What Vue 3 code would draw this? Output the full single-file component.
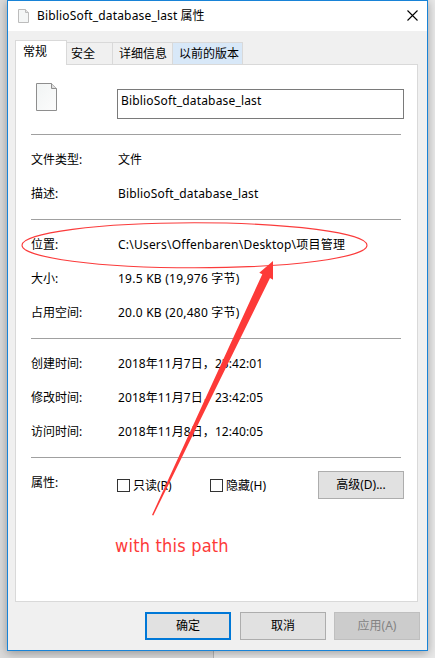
<script setup>
const tabs = [
  { label: '安全', cls: 'security' },
  { label: '详细信息', cls: 'details' },
  { label: '以前的版本', cls: 'versions' },
]
const groups = [
  [
    { label: '文件类型:', value: '文件' },
    { label: '描述:', value: 'BiblioSoft_database_last', cls: 'name' },
  ],
  [
    { label: '位置:', value: 'C:\\Users\\Offenbaren\\Desktop\\项目管理', cls: 'path' },
    { label: '大小:', value: '19.5 KB (19,976 字节)', cls: 'size' },
    { label: '占用空间:', value: '20.0 KB (20,480 字节)', cls: 'size' },
  ],
  [
    { label: '创建时间:', value: '2018年11月7日，23:42:01', cls: 'date' },
    { label: '修改时间:', value: '2018年11月7日，23:42:05', cls: 'date' },
    { label: '访问时间:', value: '2018年11月8日，12:40:05', cls: 'date' },
  ],
]
</script>

<template>
  <div class="screen">
    <div class="behind"></div>
    <div class="window">
      <header class="titlebar">
        <svg class="small-file" width="12" height="14" viewBox="0 0 12 14">
          <path d="M.5.5h7l3 3v10H.5z" fill="#f4f6f6" stroke="#bcbcbc" />
          <path d="M7.500.5v3h3" fill="#e4e4e4" stroke="#bcbcbc" />
        </svg>
        <span class="title"><span class="name">BiblioSoft_database_last</span> 属性</span>
        <svg class="close" width="11" height="11" viewBox="0 0 11 11">
          <path d="M.5.5l10 10M10.500.5l-10 10" stroke="#000" stroke-width="1.100" />
        </svg>
      </header>

      <nav class="tabs">
        <div class="tab active"><span>常规</span></div>
        <div v-for="t in tabs" :key="t.label" class="tab" :class="t.cls"><span>{{ t.label }}</span></div>
      </nav>

      <main class="panel">
        <div class="head">
          <svg class="file" width="22" height="29" viewBox="0 0 22 29">
            <defs>
              <linearGradient id="paper" x1="0" y1="0" x2="1" y2="1">
                <stop offset="0" stop-color="#f1f4f4" />
                <stop offset="1" stop-color="#fcfcfc" />
              </linearGradient>
            </defs>
            <path d="M.5.5h15l5 5v22H.5z" fill="url(#paper)" stroke="#8e8e8e" />
            <path d="M15.500.5v5h5" fill="#dedede" stroke="#8e8e8e" />
          </svg>
          <div class="field"><span class="name">BiblioSoft_database_last</span></div>
        </div>
        <template v-for="(g, i) in groups" :key="i">
          <div class="rule"></div>
          <div v-for="r in g" :key="r.label" class="row">
            <span class="label">{{ r.label }}</span>
            <span class="value" :class="r.cls">{{ r.value }}</span>
          </div>
        </template>
        <div class="rule"></div>
        <div class="row attrs">
          <span class="label">属性:</span>
          <div class="check first"><i></i><span>只读(R)</span></div>
          <div class="check"><i></i><span>隐藏(H)</span></div>
          <div class="button advanced">高级(D)...</div>
        </div>
      </main>

      <footer class="footer">
        <div class="button primary">确定</div>
        <div class="button">取消</div>
        <div class="button disabled">应用(A)</div>
      </footer>
    </div>

    <svg class="marks" width="435" height="658" viewBox="0 0 435 658">
      <ellipse cx="194.500" cy="245.300" rx="172.500" ry="22.500" fill="none" stroke="#fb3b3b" stroke-width="1.100" />
      <path d="M273 261L259.300 272.800L262.300 274.200L152 515L153.300 515.500L270 278L273 279.800z" fill="#fd3a38" />
    </svg>
    <div class="note">with this path</div>
  </div>
</template>

<style>
body { overflow: hidden; }
</style>

<style scoped>
* { box-sizing: border-box; }
.screen {
  position: relative;
  width: 435px;
  height: 658px;
  padding-left: 7px;
  overflow: hidden;
  background: #e8e8e8;
  font: 12px/16px "Noto Sans", "Noto Sans CJK SC", sans-serif;
  color: #000;
}
.behind {
  position: absolute;
  left: 0;
  top: 0;
  width: 214px;
  height: 658px;
  background: #dadada;
  border-right: 1px solid #b5b5b5;
}
.window {
  position: relative;
  display: flex;
  flex-direction: column;
  width: 421px;
  height: 651px;
  border: 1px solid #1883d7;
  background: #f0f0f0;
  box-shadow: 0 2px 9px rgba(0, 0, 0, 0.32);
}
.titlebar {
  display: flex;
  align-items: center;
  height: 30px;
  padding: 0 9px 0 10px;
  background: #fff;
}
.small-file { margin-right: 7px; }
.close { position: relative; top: -0.500px; }
.title { flex: 1; white-space: pre; }
.name { letter-spacing: 0.170px; }
.path { letter-spacing: 0.220px; }
.size { letter-spacing: 0.240px; }
.date { letter-spacing: 0.080px; }
.tabs {
  display: flex;
  align-items: flex-end;
  height: 34px;
  padding-left: 7px;
  margin-bottom: -1px;
}
.tab {
  height: 23px;
  padding-top: 3px;
  border: 1px solid #d9d9d9;
  border-left: 0;
  white-space: nowrap;
}
.active {
  position: relative;
  z-index: 1;
  width: 52px;
  height: 25px;
  padding: 3px 0 0 7px;
  border-left: 1px solid #d9d9d9;
  border-bottom: 0;
  background: #fff;
}
.security { width: 46px; padding-left: 4px; }
.details { width: 60px; padding-left: 6px; }
.versions { width: 70px; padding-left: 6px; background: #d8e8f8; }
.panel {
  width: 403px;
  height: 538px;
  margin-left: 7px;
  padding: 0 13px 0 15px;
  border: 1px solid #d9d9d9;
  background: #fff;
}
.head { display: flex; height: 61px; padding: 18px 0 0 5px; }
.file { flex: none; }
.field {
  flex: none;
  width: 287px;
  height: 30px;
  margin: 6px 0 0 59px;
  padding: 3px 3px;
  border: 1px solid #7a7a7a;
}
.rule { height: 17px; padding-top: 8px; }
.rule::before {
  content: "";
  display: block;
  width: 370px;
  height: 1px;
  background: #a0a0a0;
}
.row { display: flex; align-items: center; height: 34px; white-space: nowrap; }
.label { width: 87px; flex: none; }
.check { display: flex; flex: none; align-items: center; gap: 3px; width: 93px; margin-top: 4px; }
.check span { padding-top: 2px; }
.check.first { margin-left: -1px; }
.check i { width: 13px; height: 13px; border: 1px solid #333; }
.button {
  flex: none;
  width: 86px;
  height: 28px;
  border: 1px solid #adadad;
  background: #e1e1e1;
  line-height: 26px;
  text-align: center;
}
.advanced { margin-left: 15px; margin-top: 4px; }
.footer { display: flex; gap: 8px; margin: 10px 0 0 137px; }
.primary { margin-right: 1px; border: 2px solid #0078d7; line-height: 24px; }
.disabled { border-color: #bfbfbf; background: #ccc; color: #838383; }
.marks { position: absolute; left: 0; top: 0; }
.note {
  position: absolute;
  left: 115px;
  top: 534px;
  font: 18px/24px "DejaVu Sans Condensed", "DejaVu Sans", sans-serif;
  letter-spacing: 0.200px;
  color: #fd3a38;
  white-space: nowrap;
}
</style>
